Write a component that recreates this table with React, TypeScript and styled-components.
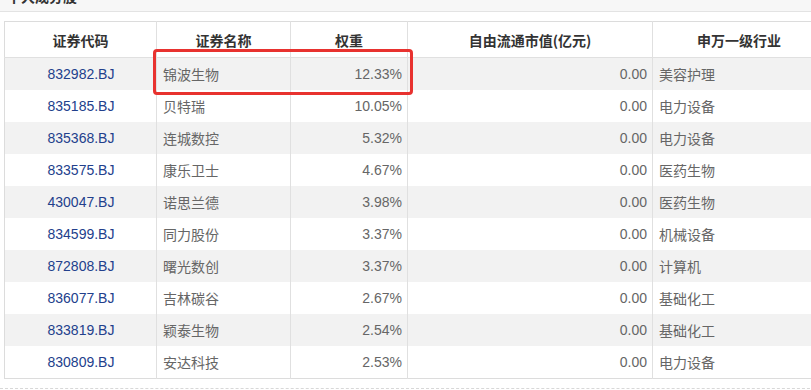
import React from 'react';
import styled, { createGlobalStyle } from 'styled-components';

const GlobalStyle = createGlobalStyle`
  html, body {
    margin: 0;
    padding: 0;
    background: #fff;
    overflow: hidden;
  }
  body {
    font-family: "Liberation Sans", "Noto Sans CJK SC", Arial, sans-serif;
  }
`;

const Page = styled.div`
  width: 830px;
`;

const TitleBar = styled.div`
  height: 30px;
  margin-top: -19px;
  line-height: 30px;
  padding-left: 7px;
  background: #f7f7f7;
  border-bottom: 1px solid #e3e3e3;
  font-family: "Noto Sans CJK SC", sans-serif;
  font-size: 14px;
  font-weight: bold;
  color: #333;
`;

const Body = styled.div`
  position: relative;
  padding: 9px 0 0 4px;
`;

const Table = styled.table`
  border-collapse: collapse;
  table-layout: fixed;
  width: 816px;
  border: 1px solid #dcdcdc;
`;

const HeadCell = styled.th<{ $w: number }>`
  width: ${({ $w }) => $w}px;
  height: 35px;
  padding: 0;
  border-right: 1px solid #e0e0e0;
  border-bottom: 1px solid #e0e0e0;
  text-align: center;
  font-family: "Noto Sans CJK SC", sans-serif;
  font-size: 14px;
  font-weight: bold;
  color: #333;
`;

const Row = styled.tr<{ $odd: boolean }>`
  background: ${({ $odd }) => ($odd ? '#f2f2f2' : '#fff')};
`;

const Cell = styled.td<{ $align: 'left' | 'center' | 'right'; $code?: boolean; $cjk?: boolean }>`
  height: 32px;
  padding: 0 5px 0 6px;
  border-right: 1px solid #e0e0e0;
  text-align: ${({ $align }) => $align};
  font-family: ${({ $cjk }) =>
    $cjk ? '"Noto Sans CJK SC", sans-serif' : '"Liberation Sans", Arial, sans-serif'};
  font-size: 14px;
  color: ${({ $code }) => ($code ? '#22408c' : '#666')};
  white-space: nowrap;
`;

const Highlight = styled.div`
  position: absolute;
  left: 153px;
  top: 37px;
  width: 254px;
  height: 40px;
  border: 3px solid #e8322f;
  border-radius: 4px;
  pointer-events: none;
`;

const Footer = styled.div`
  margin-top: 9px;
  border-top: 1px dashed #d8d8d8;
  height: 4px;
`;

const rows = [
  ['832982.BJ', '锦波生物', '12.33%', '0.00', '美容护理'],
  ['835185.BJ', '贝特瑞', '10.05%', '0.00', '电力设备'],
  ['835368.BJ', '连城数控', '5.32%', '0.00', '电力设备'],
  ['833575.BJ', '康乐卫士', '4.67%', '0.00', '医药生物'],
  ['430047.BJ', '诺思兰德', '3.98%', '0.00', '医药生物'],
  ['834599.BJ', '同力股份', '3.37%', '0.00', '机械设备'],
  ['872808.BJ', '曙光数创', '3.37%', '0.00', '计算机'],
  ['836077.BJ', '吉林碳谷', '2.67%', '0.00', '基础化工'],
  ['833819.BJ', '颖泰生物', '2.54%', '0.00', '基础化工'],
  ['830809.BJ', '安达科技', '2.53%', '0.00', '电力设备'],
];

const columns: { title: string; w: number }[] = [
  { title: '证券代码', w: 151 },
  { title: '证券名称', w: 133 },
  { title: '权重', w: 116 },
  { title: '自由流通市值(亿元)', w: 244 },
  { title: '申万一级行业', w: 172 },
];

const App: React.FC = () => (
  <Page>
    <GlobalStyle />
    <TitleBar>十大成分股</TitleBar>
    <Body>
      <Table>
        <thead>
          <tr>
            {columns.map(c => (
              <HeadCell key={c.title} $w={c.w}>{c.title}</HeadCell>
            ))}
          </tr>
        </thead>
        <tbody>
          {rows.map(([code, name, weight, cap, industry], i) => (
            <Row key={code} $odd={i % 2 === 0}>
              <Cell $align="center" $code>{code}</Cell>
              <Cell $align="left" $cjk>{name}</Cell>
              <Cell $align="right">{weight}</Cell>
              <Cell $align="right">{cap}</Cell>
              <Cell $align="left" $cjk>{industry}</Cell>
            </Row>
          ))}
        </tbody>
      </Table>
      <Highlight />
    </Body>
    <Footer />
  </Page>
);

export default App;
